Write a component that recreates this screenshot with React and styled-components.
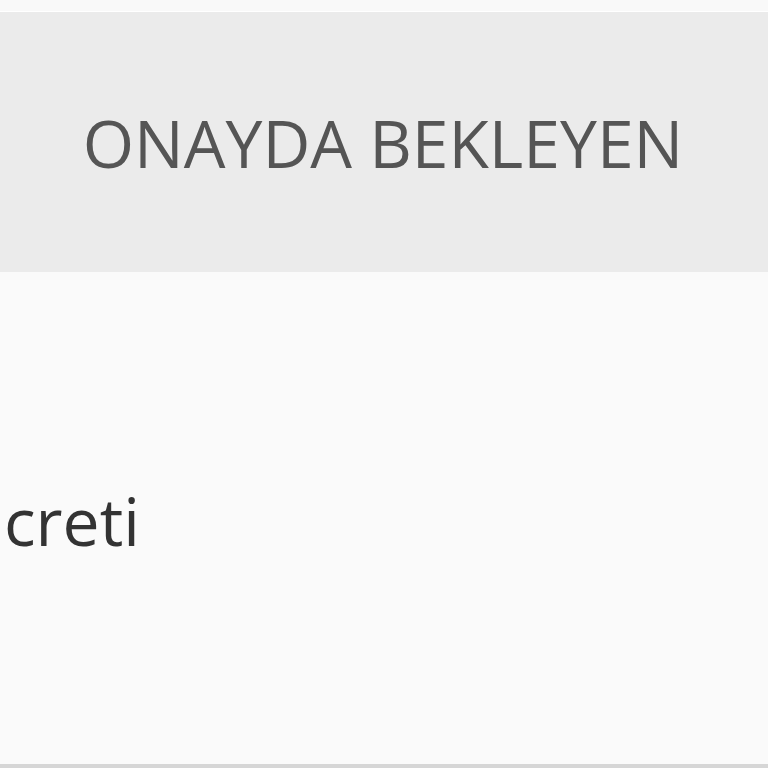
import React from "react";
import styled, { createGlobalStyle } from "styled-components";

const GlobalStyle = createGlobalStyle`
  html, body {
    margin: 0;
    padding: 0;
    background: #f9f9f9;
    font-family: "Open Sans", "Noto Sans", sans-serif;
  }
`;

const Page = styled.div`
  width: 768px;
  height: 768px;
  overflow: hidden;
  padding-top: 11px;
  box-sizing: border-box;
  display: flex;
  flex-direction: column;
`;

const Header = styled.div`
  height: 260px;
  border-top: 1px solid #ffffff;
  background: #ebebeb;
  display: flex;
  align-items: center;
  justify-content: center;
`;

const Title = styled.h2`
  margin: 0;
  font-size: 66px;
  font-weight: 400;
  color: #555555;
  letter-spacing: 0;
  transform: translate(-1px, 0);
`;

const Body = styled.div`
  flex: 1;
  background: #fafafa;
  border-bottom: 4px solid #d6d6d6;
  display: flex;
  align-items: center;
  box-sizing: border-box;
`;

const Label = styled.span`
  font-size: 66px;
  color: #333333;
  margin-left: 4px;
  line-height: 1;
  transform: translateY(2px);
`;

export default function App() {
  return (
    <>
      <GlobalStyle />
      <Page>
        <Header>
          <Title>ONAYDA BEKLEYEN</Title>
        </Header>
        <Body>
          <Label>creti</Label>
        </Body>
      </Page>
    </>
  );
}
